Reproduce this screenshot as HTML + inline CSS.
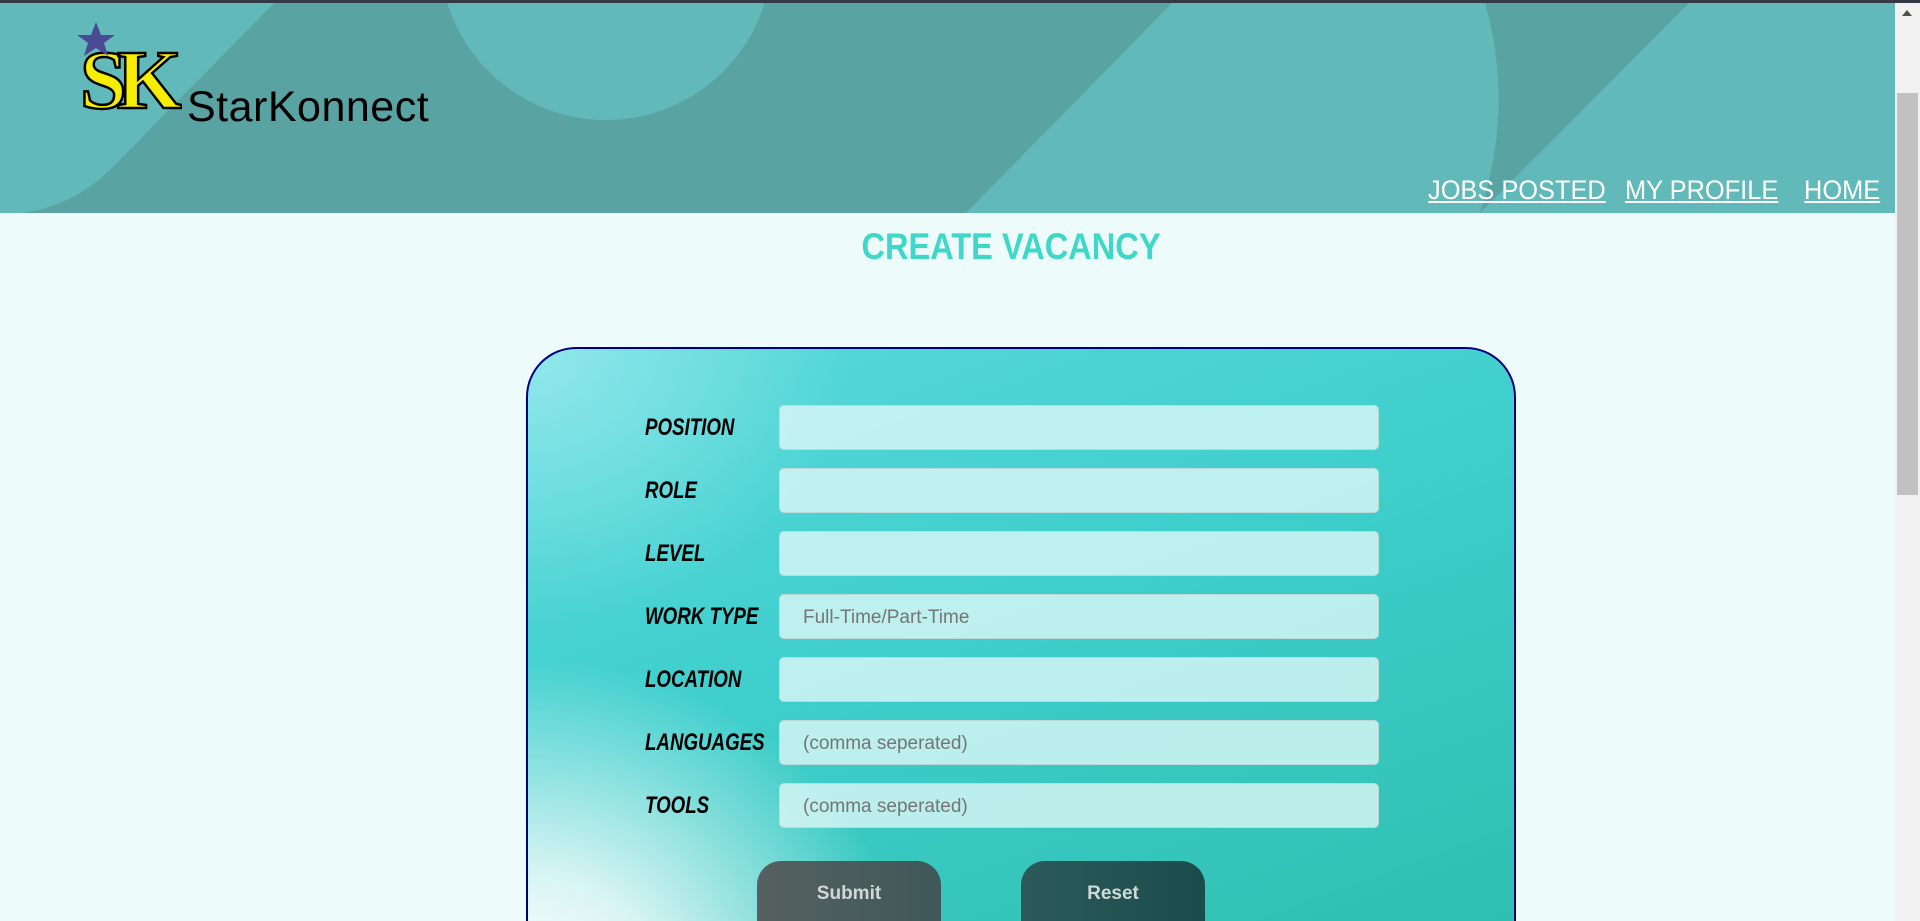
<!DOCTYPE html>
<html><head><meta charset="utf-8"><style>
*{margin:0;padding:0;box-sizing:border-box}
html,body{width:1920px;height:921px;overflow:hidden}
body{background:#eefbfb;font-family:"Liberation Sans",sans-serif;position:relative}
#wrap{position:absolute;left:0;top:0;width:1920px;height:921px;overflow:hidden}
.topbar{position:absolute;left:0;top:0;width:1920px;height:3px;background:#343a46}
header{position:absolute;left:0;top:3px;width:1895px;height:210px;overflow:hidden}
.brand{position:absolute;left:187px;top:80px;font-size:43px;color:#000;letter-spacing:0.5px}
nav{position:absolute;top:172px;left:1428px;white-space:nowrap}
nav a{color:#fff;text-decoration:underline;font-size:27px;display:inline-block;transform:scaleX(0.94);transform-origin:left;position:absolute;top:0}
h1{position:absolute;top:226px;left:761px;width:500px;text-align:center;color:#3fd8c8;font-size:37px;font-weight:bold;transform:scaleX(0.88);transform-origin:250px 0}
.card{position:absolute;left:526px;top:347px;width:990px;height:574px;border:2px solid #000080;border-bottom:none;border-radius:50px 50px 0 0;
background:
radial-gradient(ellipse 380px 330px at 0% 112%,rgba(255,255,255,1) 0%,rgba(255,255,255,0.8) 35%,rgba(255,255,255,0) 100%),
radial-gradient(ellipse 320px 280px at 0% 0%,rgba(160,235,240,0.8),rgba(160,235,240,0) 100%),
linear-gradient(160deg,#5ad9da 0%,#3fcfcd 45%,#2fbfb0 100%);}
.lbl{position:absolute;left:645px;font-size:24px;font-weight:bold;font-style:italic;color:#000;transform:scaleX(0.78);transform-origin:left;white-space:nowrap}
.inp{position:absolute;left:779px;width:600px;height:45px;border:1px solid #bfd9d9;border-radius:5px;background:rgba(225,248,248,0.78);font-size:19px;color:#757575;padding:12px 0 0 23px}
.btn{position:absolute;top:861px;width:184px;height:60px;border-radius:24px 24px 0 0;color:#d0d8d8;font-weight:bold;font-size:19px;text-align:center;padding-top:22px}
.sb{position:absolute;left:1895px;top:3px;width:25px;height:918px;background:#f1f1f1}
.thumb{position:absolute;left:1897px;top:93px;width:21px;height:402px;background:#c1c1c1}
</style></head><body><div id="wrap">
<div class="topbar"></div>
<header>
<svg width="1895" height="210" style="position:absolute;left:0;top:0">
<rect width="1895" height="210" fill="#62b9b9"/>
<path d="M277,-3 L110,167 Q70,205 20,210 L966,210 L1175,-3 Z" fill="#59a4a3"/>
<circle cx="606" cy="-49" r="166" fill="#62b9b9"/>
<path d="M1484,-3 Q1515,100 1480,210 L1692,-3 Z" fill="#59a4a3"/>
</svg>
<svg width="110" height="100" style="position:absolute;left:72px;top:15px" viewBox="0 0 110 100">
<text x="8" y="90" font-family="Liberation Serif,serif" font-size="84" font-weight="bold" fill="#f5ee00" stroke="#000" stroke-width="2.5" letter-spacing="-10">SK</text>
<polygon points="24,4 29,17 43,17 32,25 36,38 24,30 12,38 16,25 5,17 19,17" fill="#4a4a94"/>
</svg>
<div class="brand">StarKonnect</div>
<nav><a style="left:0">JOBS POSTED</a><a style="left:197px">MY PROFILE</a><a style="left:376px">HOME</a></nav>
</header>
<h1>CREATE VACANCY</h1>
<div class="card"></div>
<div class="lbl" style="top:414px">POSITION</div><div class="inp" style="top:405px"></div>
<div class="lbl" style="top:477px">ROLE</div><div class="inp" style="top:468px"></div>
<div class="lbl" style="top:540px">LEVEL</div><div class="inp" style="top:531px"></div>
<div class="lbl" style="top:603px">WORK TYPE</div><div class="inp" style="top:594px">Full-Time/Part-Time</div>
<div class="lbl" style="top:666px">LOCATION</div><div class="inp" style="top:657px"></div>
<div class="lbl" style="top:729px">LANGUAGES</div><div class="inp" style="top:720px">(comma seperated)</div>
<div class="lbl" style="top:792px">TOOLS</div><div class="inp" style="top:783px">(comma seperated)</div>
<div class="btn" style="left:757px;background:linear-gradient(90deg,#566060,#3f5858)">Submit</div>
<div class="btn" style="left:1021px;background:linear-gradient(90deg,#2c5a5a,#1a4c4c)">Reset</div>
<div class="sb"></div><div class="thumb"></div>
<div style="position:absolute;left:1902px;top:10px;width:0;height:0;border-left:5px solid transparent;border-right:5px solid transparent;border-bottom:6px solid #505050"></div>
</div></body></html>
